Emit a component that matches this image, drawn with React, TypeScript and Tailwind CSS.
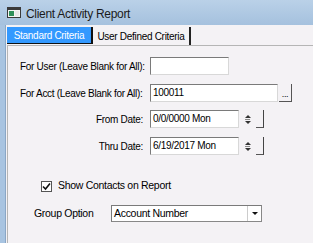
import React from 'react';

function Spinner() {
  return (
    <div className="flex items-center ml-[4px] gap-[4px]">
      <div className="flex flex-col items-center justify-center w-[9px] h-[16px] gap-[1px]">
        <span className="block w-0 h-0 border-l-[3px] border-r-[3px] border-b-[3px] border-l-transparent border-r-transparent border-b-[#333]" />
        <span className="block w-[5px] h-px bg-[#888]" />
        <span className="block w-0 h-0 border-l-[3px] border-r-[3px] border-t-[3px] border-l-transparent border-r-transparent border-t-[#333]" />
      </div>
      <div className="w-[8px] h-[18px] border-r border-b border-[#555] border-r-[#444]" />
    </div>
  );
}

function TextBox({ value, width }: { value?: string; width: string }) {
  return (
    <div
      className={`${width} h-[18px] shrink-0 bg-white border border-t-[#7a7a7a] border-l-[#7a7a7a] border-r-[#d8d8d8] border-b-[#d8d8d8] flex items-center px-[2px] text-black leading-none whitespace-nowrap`}
    >
      {value}
    </div>
  );
}

function App() {
  return (
    <div
      className="w-[313px] h-[243px] overflow-hidden flex flex-col bg-[#a8c4e1] text-black whitespace-nowrap tracking-[-0.3px]"
      style={{ fontFamily: '"Liberation Sans", Arial, sans-serif' }}
    >
      {/* title bar */}
      <div className="h-[25px] flex items-center pl-[7px] gap-[5px] bg-gradient-to-b from-[#bad1e8] to-[#a5c1de] shrink-0">
        <svg width="14" height="11" viewBox="0 0 14 11">
          <rect x="0.5" y="0.5" width="13" height="10" fill="#f4f4f4" stroke="#3a3a3a" />
          <rect x="1" y="1" width="12" height="2" fill="#3a3a3a" />
          <rect x="2" y="4" width="5" height="5" fill="#2f8f5a" />
          <rect x="8" y="4" width="4" height="5" fill="#e8e8e8" />
        </svg>
        <span className="text-[12px] text-[#1b1b1b] mt-[2px] tracking-[-0.3px]">
          Client Activity Report
        </span>
      </div>

      <div className="flex-1 flex">
        <div className="w-[6px] shrink-0 bg-[#a8c4e1] border-r border-[#8aa7c6]" />
        <div className="flex-1 flex flex-col bg-[#f4f2f5]">
          {/* tabs */}
          <div className="h-[20px] flex items-end pl-[1px] shrink-0 text-[10px]">
            <div className="h-[17px] w-[86px] bg-[#3399ff] text-white flex items-center justify-center border-r-2 border-b border-[#111] mb-[1px]">
              Standard Criteria
            </div>
            <div className="h-[18px] w-[98px] flex items-center justify-center border-r-2 border-[#222]">
              User Defined Criteria
            </div>
          </div>

          {/* panel */}
          <div className="flex-1 border-t border-l border-[#b5b5b5] ml-[1px] pt-[11px] text-[10px]">
            <div className="flex items-center h-[18px] pl-[12px]">
              <span className="w-[130px] shrink-0">For User (Leave Blank for All):</span>
              <TextBox width="w-[79px]" />
            </div>

            <div className="flex items-center h-[18px] pl-[12px] mt-[9px]">
              <span className="w-[130px] shrink-0">For Acct (Leave Blank for All):</span>
              <TextBox width="w-[128px]" value="100011" />
              <div className="w-[13px] h-[18px] ml-[1px] border-r border-b border-[#555] flex items-end justify-center pb-[2px] text-[9px] leading-none">
                ...
              </div>
            </div>

            <div className="flex items-center h-[18px] pl-[12px] mt-[8px]">
              <span className="w-[127px] shrink-0 text-right pr-[4px] mr-[3px]">From Date:</span>
              <TextBox width="w-[89px]" value="0/0/0000 Mon" />
              <Spinner />
            </div>

            <div className="flex items-center h-[18px] pl-[12px] mt-[9px]">
              <span className="w-[127px] shrink-0 text-right pr-[4px] mr-[3px]">Thru Date:</span>
              <TextBox width="w-[89px]" value="6/19/2017 Mon" />
              <Spinner />
            </div>

            <div className="flex items-center pl-[33px] mt-[24px] h-[14px]">
              <div className="w-[11px] h-[11px] bg-white border border-[#555] flex items-center justify-center">
                <svg width="9" height="9" viewBox="0 0 9 9">
                  <path d="M1 4.5 L3.5 7 L8 1.5" stroke="#111" strokeWidth="1.6" fill="none" />
                </svg>
              </div>
              <span className="ml-[6px] text-[10.5px]">Show Contacts on Report</span>
            </div>

            <div className="flex items-center pl-[26px] mt-[12px] h-[17px]">
              <span className="w-[77px] shrink-0 text-[10.5px]">Group Option</span>
              <div className="w-[151px] h-[17px] bg-white border border-t-[#7a7a7a] border-l-[#7a7a7a] border-r-[#888] border-b-[#888] flex items-center pl-[2px] text-[10.5px]">
                <span className="flex-1">Account Number</span>
                <div className="w-[14px] h-[15px] flex items-center justify-center border-l border-[#ccc]">
                  <span className="block w-0 h-0 border-l-[3px] border-r-[3px] border-t-[3px] border-l-transparent border-r-transparent border-t-[#111]" />
                </div>
              </div>
            </div>
          </div>
        </div>
      </div>
    </div>
  );
}

export default App;
